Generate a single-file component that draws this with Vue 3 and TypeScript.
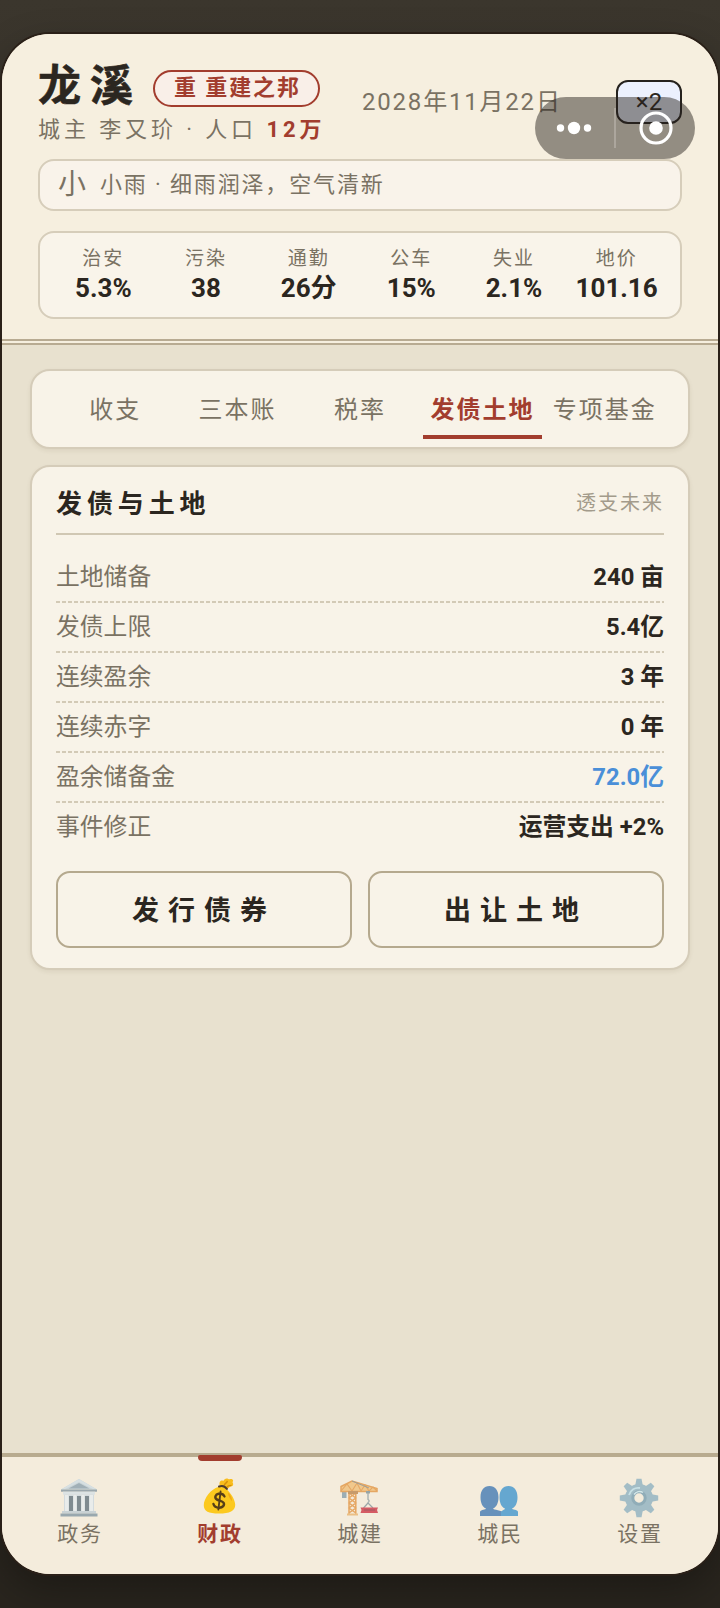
<script setup lang="ts">
interface Stat { label: string; value: string }
interface Row { label: string; value: string; tone?: string }
interface NavItem { label: string; icon: string; active?: boolean }

const stats: Stat[] = [
  { label: '治安', value: '5.3%' },
  { label: '污染', value: '38' },
  { label: '通勤', value: '26分' },
  { label: '公车', value: '15%' },
  { label: '失业', value: '2.1%' },
  { label: '地价', value: '101.16' },
]
const tabs: string[] = ['收支', '三本账', '税率', '发债土地', '专项基金']
const activeTab = '发债土地'
const rows: Row[] = [
  { label: '土地储备', value: '240 亩' },
  { label: '发债上限', value: '5.4亿' },
  { label: '连续盈余', value: '3 年' },
  { label: '连续赤字', value: '0 年' },
  { label: '盈余储备金', value: '72.0亿', tone: 'blue' },
  { label: '事件修正', value: '运营支出 +2%' },
]
const nav: NavItem[] = [
  { label: '政务', icon: 'hall' },
  { label: '财政', icon: 'money', active: true },
  { label: '城建', icon: 'crane' },
  { label: '城民', icon: 'people' },
  { label: '设置', icon: 'gear' },
]
const teeth: number[] = [0, 45, 90, 135, 180, 225, 270, 315]
</script>

<template>
  <div class="stage">
    <div class="phone">
      <header class="header">
        <div class="top">
          <div class="ident">
            <div class="name-row">
              <h1>龙溪</h1>
              <span class="badge">重 重建之邦</span>
            </div>
            <div class="lord">城主 李又玠 · 人口 <b>12万</b></div>
          </div>
          <div class="date">2028年11月22日</div>
          <button class="speed">×2</button>
        </div>
        <div class="weather"><span class="w-icon">小</span><span>小雨 · 细雨润泽，空气清新</span></div>
        <div class="stats">
          <div v-for="s in stats" :key="s.label" class="stat">
            <span class="s-label">{{ s.label }}</span>
            <span class="s-value">{{ s.value }}</span>
          </div>
        </div>
      </header>

      <main class="content">
        <div class="tabs">
          <div v-for="t in tabs" :key="t" class="tab" :class="{ on: t === activeTab }">{{ t }}</div>
        </div>
        <section class="card">
          <div class="card-head">
            <h2>发债与土地</h2>
            <span>透支未来</span>
          </div>
          <div class="rows">
            <div v-for="r in rows" :key="r.label" class="row">
              <span>{{ r.label }}</span>
              <b :class="r.tone">{{ r.value }}</b>
            </div>
          </div>
          <div class="actions">
            <button>发行债券</button>
            <button>出让土地</button>
          </div>
        </section>
      </main>

      <nav class="nav">
        <div v-for="n in nav" :key="n.label" class="nav-item" :class="{ on: n.active }">
          <svg v-if="n.icon === 'hall'" viewBox="0 0 40 40">
            <path d="M20 1 38 11.5H2z" fill="#b9cbd6" />
            <path d="M20 1 38 11.5h-3L20 4 5 11.5H2z" fill="#cbdbe5" />
            <path d="M20 5 30.500 10.500h-21z" fill="#7f98a8" />
            <rect x="2" y="11.500" width="36" height="2.200" fill="#748b9a" />
            <rect x="4" y="13.700" width="32" height="3" fill="#d3e0e8" />
            <rect x="5" y="16.500" width="30" height="17" fill="#c6d5df" />
            <path d="M10 18h4v15h-4zM18 18h4v15h-4zM26 18h4v15h-4z" fill="#4e6370" />
            <path d="M6 17h3.500v17H6zM14.500 17H17.500v17h-3zM22.500 17h3v17h-3zM30.500 17H34v17h-3.500z" fill="#e5edf2" />
            <rect x="3" y="33" width="34" height="2.500" fill="#b7c8d2" />
            <rect x="1.500" y="35.500" width="37" height="3" fill="#738c9b" />
          </svg>
          <svg v-else-if="n.icon === 'money'" viewBox="0 0 40 40">
            <path d="M20.500 9c-1-3-.5-5 1-6 1.700-1 3 .2 3-.2 1-2 3-2.800 5-1.800 1.500.8 3-.5 4.500.5 1.800 1.200-.5 2.500.5 4 .8 1.500.2 3.500-2 3.800-2.200.4-3 2.500-5.500 3.200z" fill="#f9bd1d" />
            <path d="M25 8c1-3 3-2 3.500-5M28 10c1-2 3-2 5-2" stroke="#d58f0b" stroke-width="1.500" fill="none" />
            <path d="M19.500 9.500c3-.8 5.500.2 7.800 2.300 5 4 9.700 12.200 9.700 17.200 0 7-6 9.500-17.500 9.500S3 36 3 29.500C3 22 11 11.500 19.500 9.500z" fill="#fcc91f" />
            <path d="M29 16c3.500 1.500 4.500 6.500 4.500 9-2-2-4-5.500-4.500-9z" fill="#f1a916" />
            <path d="M19.500 9.200c3-1.200 6.500-.2 8.500 2.600" stroke="#4e3b2d" stroke-width="2.200" fill="none" stroke-linecap="round" />
            <g transform="rotate(7 19.500 24)" fill="none" stroke="#573f18" stroke-width="2.600" stroke-linecap="round">
              <path d="M24.800 19.200c-1.300-2.200-4.200-2.700-6.600-2-3.300 1-4.300 4.800-1.300 6.200 2.500 1.200 6 .7 7.700 2.600 2 2.600-.3 5.600-3.900 6-3.300.4-5.700-.8-6.700-3.200" />
              <path d="M20 14.500v19.600" stroke-width="2" />
            </g>
          </svg>
          <svg v-else-if="n.icon === 'crane'" viewBox="0 0 40 40">
            <path d="M3 11.500h4.500V20H3z" fill="#7895a4" />
            <g fill="none" stroke="#e08a30" stroke-width="1.500">
              <path d="M2 8.500 13 3l25 7.500v3H2z" fill="#efba6c" />
              <path d="m2 13 6-7 5 7 5-8 4 8 4-6 4 6 4-4 4 4" stroke-width="1.100" />
              <path d="M10 14.500v22M16.800 14.500v22M10 15l6.800 5-6.800 5 6.800 5-6.800 5M16.800 15 10 20l6.800 5-6.800 5 6.800 5" />
            </g>
            <path d="M9 13h10v3H9z" fill="#b5793a" /><path d="M8 35.500h11v2H8z" fill="#e8ad60" />
            <path d="m13 3 17 7" stroke="#6c7c84" stroke-width=".9" />
            <path d="M27 13h4v2.500h-4z" fill="#71878f" />
            <path d="M29 15v6.500c2 1 1 3-.5 3M29 25l-4.500 5M29 25l5 5" stroke="#778b94" stroke-width="1.200" fill="none" />
            <path d="M21.500 29.500H39l-1 2.500 1 3H21.500l1-3z" fill="#c91f32" /><path d="M25 32h11" stroke="#861e31" stroke-width="1.200" />
          </svg>
          <svg v-else-if="n.icon === 'people'" viewBox="0 0 40 40">
            <path d="M10.500 8c5.600 0 9 4.500 9 11.200 0 6-2.200 10-5.500 11.300 0 2 9.500.8 10.500 5.200V38H1v-4.300c1-2.500 6-1.500 6-3.200-3.300-1.300-5.500-5.300-5.500-11.300C1.500 12.500 4.900 8 10.500 8z" fill="#2c6bae" />
            <path d="M29.500 8c5.600 0 9 4.500 9 11.200 0 6-2.200 10-5.500 11.300 0 1.700 5.500.7 6 3.200V38H22v-2.500c-.5-3.500 4-3.300 4-5-3.300-1.300-5.500-5.300-5.500-11.300C20.500 12.500 23.900 8 29.500 8z" fill="#2a8acb" />
          </svg>
          <svg v-else viewBox="0 0 40 40">
            <g fill="#82aabd">
              <path v-for="a in teeth" :key="a" d="M17.500.800h5l1.500 8h-8z" :transform="`rotate(${a} 20 20)`" />
            </g>
            <circle cx="20" cy="20" r="9.700" fill="none" stroke="#82aabd" stroke-width="8.500" />
            <path d="M10 17c1.500-5 6-8 11-7" stroke="#b5dbe9" stroke-width="1.800" fill="none" />
            <circle cx="20" cy="20" r="6.200" fill="none" stroke="#6793aa" stroke-width="3" />
            <path d="M15 16.500c2-3 6-4 9-2" stroke="#c6e5ee" stroke-width="1.500" fill="none" />
          </svg>
          <span>{{ n.label }}</span>
        </div>
      </nav>
    </div>

    <div class="capsule">
      <svg viewBox="0 0 160 62">
        <g fill="#fff">
          <circle cx="25.500" cy="31" r="3.700" /><circle cx="39" cy="31" r="6.200" /><circle cx="52.500" cy="31" r="3.700" />
          <circle cx="121" cy="31" r="6.800" />
        </g>
        <path d="M80 11v40" stroke="#b5afa6" stroke-width="1.500" />
        <circle cx="121" cy="31" r="15" fill="none" stroke="#fff" stroke-width="3.200" />
      </svg>
    </div>
  </div>
</template>

<style>
body { margin: 0; background: #2a261f; }
</style>

<style scoped>
* { box-sizing: border-box; }
h1, h2 { margin: 0; }
button { padding: 0; margin: 0; font-family: inherit; color: inherit; }
.stage {
  position: relative;
  height: 1608px;
  padding: 34px 2px;
  background: linear-gradient(180deg, #3b362d 0%, #2b261f 50%, #29251e 100%);
  font-family: Roboto, "Noto Sans CJK SC", sans-serif;
  color: #2b2620;
  overflow: hidden;
}
.phone {
  display: flex;
  flex-direction: column;
  height: 1540px;
  border-radius: 48px;
  overflow: hidden;
  background: #e8e1cf;
  box-shadow: 0 0 0 2px #2a2018, 0 16px 40px rgba(0, 0, 0, .3);
}
.header {
  height: 311px;
  flex: none;
  padding: 23px 36px 0;
  background: #f6efdf;
  border-bottom: 6px double #b8ab92;
}
.top { display: flex; height: 102px; }
.ident { flex: none; width: 324px; white-space: nowrap; }
.name-row { display: flex; align-items: center; height: 58px; }
h1 {
  font-size: 43px;
  line-height: 56px;
  letter-spacing: 9px;
  font-weight: 700;
  -webkit-text-stroke: .6px currentColor;
}
.badge {
  margin: 5px 0 0 11px;
  height: 37px;
  padding: 0 17px 0 19px;
  border: 2px solid #a23d2e;
  border-radius: 19px;
  background: #f9efe8;
  color: #a23d2e;
  font-size: 22px;
  line-height: 31px;
  font-weight: 700;
  letter-spacing: 1.9px;
}
.lord { font-size: 22px; letter-spacing: 3.9px; line-height: 30px; color: #7a7263; }
.lord b { color: #a23d2e; }
.date { margin-top: 30px; line-height: 30px; font-size: 24px; letter-spacing: 1.8px; color: #7a7263; white-space: nowrap; }
.speed {
  margin: 23px 0 0 auto;
  width: 66px;
  height: 44px;
  border: 2px solid #25221e;
  border-radius: 12px;
  background: #ecf1fe;
  font-size: 24px;
}
.weather {
  display: flex;
  align-items: center;
  height: 52px;
  padding: 0 18px 6px;
  border: 2px solid #d6cdba;
  border-radius: 16px;
  background: #f9f3ea;
  color: #7a7263;
  font-size: 22px;
  letter-spacing: 1.85px;
}
.w-icon { font-size: 28px; line-height: 36px; padding-top: 5px; letter-spacing: 0; margin-right: 14px; }
.stats {
  display: grid;
  grid-template-columns: repeat(6, 1fr);
  margin-top: 20px;
  height: 88px;
  padding: 13px 12px 0;
  border: 2px solid #d6cdba;
  border-radius: 16px;
  background: #f9f4ea;
}
.stat { display: flex; flex-direction: column; align-items: center; }
.s-label { font-size: 19px; letter-spacing: 2px; line-height: 26px; color: #7a7263; }
.s-value { font-size: 26px; font-weight: 700; line-height: 32px; white-space: nowrap; }
.content {
  flex: 1;
  padding: 24px 28px 0;
  background: #e8e1cf;
}
.tabs {
  display: flex;
  gap: 4px;
  height: 80px;
  padding: 8px 24px;
  border: 2px solid #d5ccb9;
  border-radius: 20px;
  background: #f8f3e8;
  box-shadow: 0 2px 4px rgba(80, 60, 30, .08);
}
.tab {
  flex: 1 1 0;
  width: 0;
  height: 60px;
  display: flex;
  justify-content: center;
  align-items: center;
  border-bottom: 4px solid transparent;
  font-size: 24px;
  letter-spacing: 2px;
  white-space: nowrap;
  color: #7a7263;
}
.tab.on { color: #a23d2e; font-weight: 700; border-color: #a23d2e; }
.card {
  margin-top: 16px;
  height: 505px;
  padding: 18px 24px 0;
  border: 2px solid #d5ccb9;
  border-radius: 20px;
  background: #f8f3e8;
  box-shadow: 0 2px 4px rgba(80, 60, 30, .08);
}
.card-head {
  display: flex;
  justify-content: space-between;
  height: 50px;
  border-bottom: 2px solid #d0c7b3;
}
h2 { font-size: 26px; letter-spacing: 4.9px; line-height: 38px; font-weight: 700; }
.card-head span { font-size: 20px; letter-spacing: 2px; line-height: 36px; color: #a39b8b; }
.rows { margin-top: 18px; }
.row {
  display: flex;
  justify-content: space-between;
  height: 50px;
  font-size: 23.800px;
  line-height: 49px;
  color: #7a7263;
  background: repeating-linear-gradient(90deg, #d3cab6 0 4px, transparent 4px 6px) 0 100% / 100% 2px no-repeat;
}
.row:last-child { background: none; }
.row b { color: #2b2620; }
.row b.blue { color: #4a8fd8; }
.actions { display: flex; gap: 16px; margin-top: 18px; }
.actions button {
  flex: 1;
  height: 77px;
  padding-bottom: 3px;
  border: 2px solid #b5a98e;
  border-radius: 14px;
  background: transparent;
  font-size: 27px;
  font-weight: 700;
  letter-spacing: 9px;
}
.nav {
  display: flex;
  flex: none;
  height: 121px;
  padding: 0 8px;
  border-top: 4px solid #b8ab8f;
  background: #f4ecdc;
}
.nav-item {
  position: relative;
  flex: 1;
  display: flex;
  flex-direction: column;
  align-items: center;
  padding-top: 21px;
  font-size: 21px;
  line-height: 32px;
  letter-spacing: 1.7px;
  color: #7a7263;
}
.nav-item svg { display: block; width: 40px; height: 40px; margin-right: 2px; opacity: .7; }
.nav-item.on { color: #a23d2e; font-weight: 700; }
.nav-item.on svg { width: 37px; height: 39px; margin-bottom: 1px; opacity: 1; transform: translateY(-1px); }
.nav-item.on::before {
  content: "";
  position: absolute;
  top: -2px;
  left: 48px;
  width: 44px;
  height: 6px;
  border-radius: 2px 2px 4px 4px;
  background: #a23d2e;
}
.capsule {
  position: absolute;
  left: 535px;
  top: 97px;
  width: 160px;
  height: 62px;
  border-radius: 31px;
  background: rgba(40, 34, 30, .48);
}
.capsule svg { display: block; width: 160px; height: 62px; }
</style>
